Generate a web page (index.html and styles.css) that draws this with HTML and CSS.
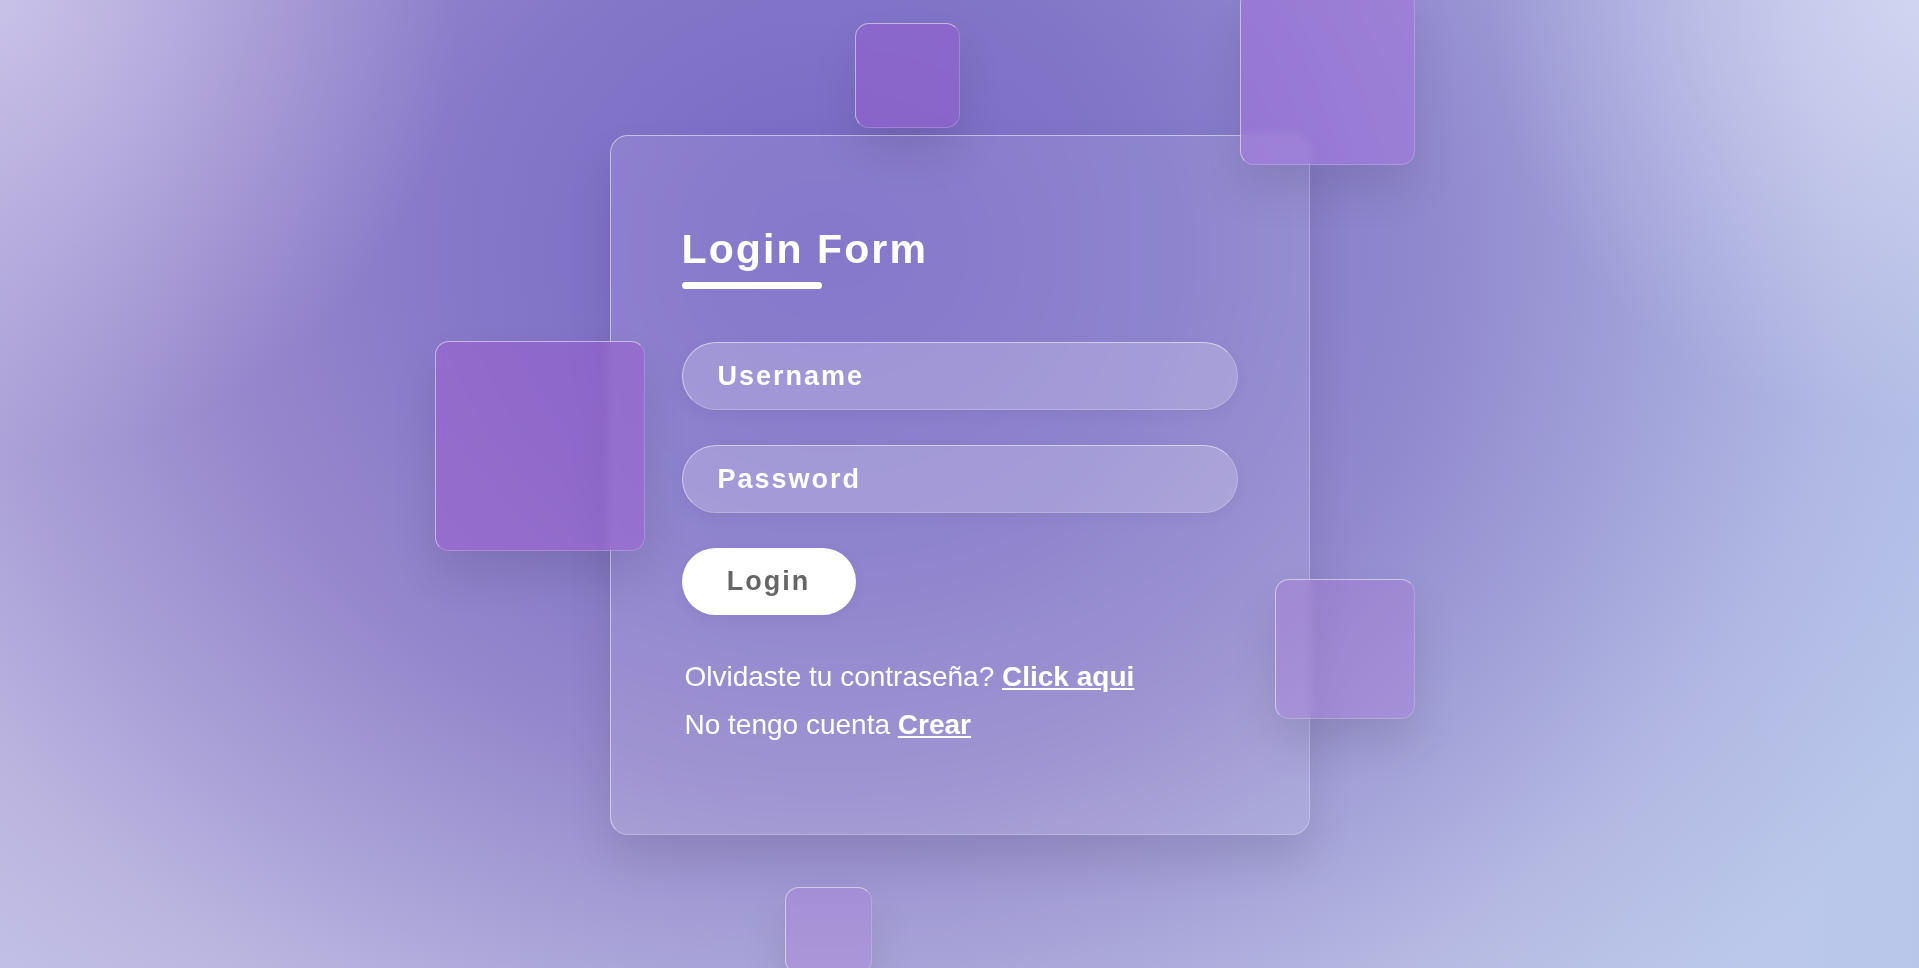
FILE: index.html
```html
<!DOCTYPE html>
<html lang="es">
<head>
<meta charset="utf-8">
<title>Login Form</title>
<link rel="stylesheet" href="styles.css">
</head>
<body>
<main class="scene">
  <section class="card">
    <form class="form">
      <h2 class="title">Login Form</h2>
      <input class="field" type="text" placeholder="Username">
      <input class="field" type="password" placeholder="Password">
      <button class="btn" type="button">Login</button>
      <p class="note">Olvidaste tu contraseña? <a href="#">Click aqui</a></p>
      <p class="note">No tengo cuenta <a href="#">Crear</a></p>
    </form>
  </section>
  <div class="square sq-top"></div>
  <div class="square sq-corner"></div>
  <div class="square sq-left"></div>
  <div class="square sq-right"></div>
  <div class="square sq-bottom"></div>
</main>
</body>
</html>
```
FILE: styles.css
```css
* {
  box-sizing: border-box;
}

html, body {
  margin: 0;
  padding: 0;
}

body {
  font-family: "Liberation Sans", Arial, sans-serif;
  background:
    radial-gradient(circle 460px at 0 0, rgba(212, 206, 238, 0.7), rgba(212, 206, 238, 0) 100%),
    radial-gradient(circle 430px at 100% 0, rgba(222, 222, 244, 0.7), rgba(222, 222, 244, 0) 100%),
    linear-gradient(90deg, rgba(175, 125, 205, 0.14) 0%, rgba(175, 125, 205, 0) 40%, rgba(120, 160, 230, 0) 55%, rgba(120, 160, 230, 0.2) 100%),
    radial-gradient(ellipse 880px 760px at 830px 250px, #7868c6 0%, #8276c8 40%, #9488cc 70%, #a8a4d8 95%, #bcbce2 115%, #c8d0ec 140%);
  min-height: 100vh;
  overflow: hidden;
}

.scene {
  position: relative;
  height: 100vh;
  display: flex;
  align-items: center;
  justify-content: center;
}

.card {
  width: 700px;
  height: 700px;
  margin-top: 2px;
  padding: 90px 71px 0;
  border-radius: 18px;
  border: 1px solid rgba(255, 255, 255, 0.5);
  border-right-color: rgba(255, 255, 255, 0.25);
  border-bottom-color: rgba(255, 255, 255, 0.25);
  background: rgba(255, 255, 255, 0.1);
  backdrop-filter: blur(5px);
  box-shadow: 0 25px 45px rgba(0, 0, 0, 0.1);
}

.form {
  display: flex;
  flex-direction: column;
  align-items: flex-start;
}

.title {
  margin: 0 0 53px;
  color: #fff;
  font-size: 41px;
  line-height: 46px;
  font-weight: 700;
  letter-spacing: 2.1px;
}

.title::after {
  content: "";
  display: block;
  width: 140px;
  height: 7px;
  margin-top: 10px;
  border-radius: 4px;
  background: #fff;
}

.field {
  width: 100%;
  height: 68px;
  margin: 0 0 35px;
  padding: 0 35px;
  border-radius: 34px;
  border: 1px solid rgba(255, 255, 255, 0.5);
  border-right-color: rgba(255, 255, 255, 0.2);
  border-bottom-color: rgba(255, 255, 255, 0.2);
  background: rgba(255, 255, 255, 0.2);
  box-shadow: 0 5px 15px rgba(0, 0, 0, 0.05);
  outline: none;
  font-family: inherit;
  font-size: 27px;
  font-weight: 700;
  letter-spacing: 2px;
  color: #fff;
}

.field::placeholder {
  color: #fff;
  opacity: 1;
}

.btn {
  width: 174px;
  height: 67px;
  margin: 0 0 46px;
  padding: 0;
  border: none;
  border-radius: 34px;
  background: #fff;
  color: #666;
  font-family: inherit;
  font-size: 27px;
  font-weight: 700;
  letter-spacing: 2px;
  box-shadow: 0 5px 15px rgba(0, 0, 0, 0.05);
  cursor: pointer;
}

.note {
  margin: 0 0 16px 3px;
  color: #fff;
  font-size: 28px;
  line-height: 32px;
}

.note a {
  color: #fff;
  font-weight: 700;
}

.square {
  position: absolute;
  border-radius: 14px;
  border: 1px solid rgba(255, 255, 255, 0.5);
  border-right-color: rgba(255, 255, 255, 0.2);
  border-bottom-color: rgba(255, 255, 255, 0.2);
  backdrop-filter: blur(5px);
  box-shadow: 0 25px 45px rgba(0, 0, 0, 0.1);
}

.sq-top {
  left: 855px;
  top: 23px;
  width: 105px;
  height: 105px;
  background: rgba(150, 92, 205, 0.5);
}

.sq-corner {
  left: 1240px;
  top: -10px;
  width: 175px;
  height: 175px;
  background: rgba(170, 110, 225, 0.4);
}

.sq-left {
  left: 435px;
  top: 341px;
  width: 210px;
  height: 210px;
  background: rgba(155, 92, 205, 0.5);
}

.sq-right {
  left: 1275px;
  top: 579px;
  width: 140px;
  height: 140px;
  background: rgba(170, 120, 215, 0.35);
}

.sq-bottom {
  left: 785px;
  top: 887px;
  width: 87px;
  height: 87px;
  background: rgba(175, 130, 220, 0.35);
}
```
